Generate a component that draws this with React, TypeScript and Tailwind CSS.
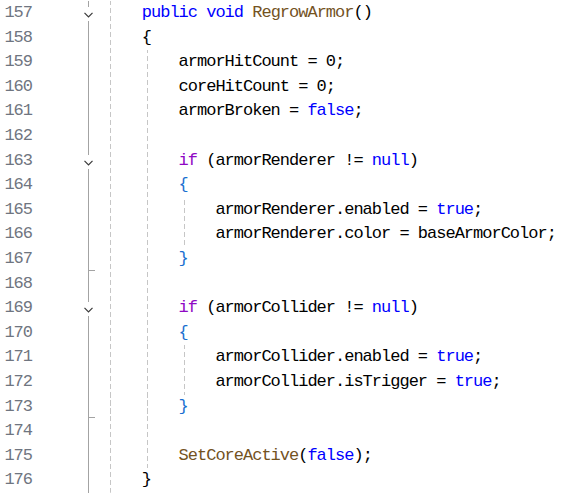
import React from "react";

type Tok = [string, string?];
type Line = {
  n: number;
  guides: number;
  toks: Tok[];
  fold?: "open" | "end";
};

const KW = "text-[#0000ff]";
const CTRL = "text-[#8f08c4]";
const METH = "text-[#74531f]";
const BR2 = "text-[#1a6fd0]";

const lines: Line[] = [
  { n: 157, guides: 1, fold: "open", toks: [["public", KW], [" "], ["void", KW], [" "], ["RegrowArmor", METH], ["()"]] },
  { n: 158, guides: 1, toks: [["{"]] },
  { n: 159, guides: 2, toks: [["armorHitCount = 0;"]] },
  { n: 160, guides: 2, toks: [["coreHitCount = 0;"]] },
  { n: 161, guides: 2, toks: [["armorBroken = "], ["false", KW], [";"]] },
  { n: 162, guides: 2, toks: [] },
  { n: 163, guides: 2, fold: "open", toks: [["if", CTRL], [" (armorRenderer != "], ["null", KW], [")"]] },
  { n: 164, guides: 2, toks: [["{", BR2]] },
  { n: 165, guides: 3, toks: [["armorRenderer.enabled = "], ["true", KW], [";"]] },
  { n: 166, guides: 3, toks: [["armorRenderer.color = baseArmorColor;"]] },
  { n: 167, guides: 2, fold: "end", toks: [["}", BR2]] },
  { n: 168, guides: 2, toks: [] },
  { n: 169, guides: 2, fold: "open", toks: [["if", CTRL], [" (armorCollider != "], ["null", KW], [")"]] },
  { n: 170, guides: 2, toks: [["{", BR2]] },
  { n: 171, guides: 3, toks: [["armorCollider.enabled = "], ["true", KW], [";"]] },
  { n: 172, guides: 3, toks: [["armorCollider.isTrigger = "], ["true", KW], [";"]] },
  { n: 173, guides: 2, fold: "end", toks: [["}", BR2]] },
  { n: 174, guides: 2, toks: [] },
  { n: 175, guides: 2, toks: [["SetCoreActive", METH], ["("], ["false", KW], [");"]] },
  { n: 176, guides: 1, toks: [["}"]] },
];

function Guide() {
  return (
    <div className="w-[36.8px] shrink-0 h-full flex">
      <div className="ml-[5px] w-px h-full bg-fixed bg-[repeating-linear-gradient(to_bottom,#c6c6c6_0px,#c6c6c6_5px,transparent_5px,transparent_8px)]" />
    </div>
  );
}

function FoldCell({ fold }: { fold?: "open" | "end" }) {
  if (fold === "open") {
    return (
      <div className="w-[73px] shrink-0 h-full flex">
        <div className="ml-[52px] w-[9px] h-full flex flex-col items-center">
          <div className="w-px h-[6px] bg-[#a3a3a3]" />
          <div className="h-[14px] flex items-center justify-center">
            <svg width="9" height="6" viewBox="0 0 9 6" className="mt-[2px]">
              <path d="M0.5 0.8 L4.5 4.8 L8.5 0.8" fill="none" stroke="#3a3a3a" strokeWidth="1.2" />
            </svg>
          </div>
          <div className="w-px flex-1 bg-[#a3a3a3]" />
        </div>
      </div>
    );
  }
  return (
    <div className="w-[73px] shrink-0 h-full flex">
      <div className="ml-[56px] w-px h-full bg-[#a3a3a3]" />
      {fold === "end" && <div className="self-end mb-px w-[6px] h-px bg-[#a3a3a3]" />}
    </div>
  );
}

export default function App() {
  return (
    <div className="w-[570px] h-[493px] bg-white overflow-hidden pt-px font-['Liberation_Mono',monospace] text-[17px] tracking-[-1px] text-black">
      {lines.map((l) => (
        <div key={l.n} className="flex h-[24.6px] items-stretch">
          <div className="w-[32px] shrink-0 text-right text-[#6f7580] leading-[24.6px]">{l.n}</div>
          <FoldCell fold={l.fold} />
          {Array.from({ length: l.guides }).map((_, i) => (
            <Guide key={i} />
          ))}
          <div className="whitespace-pre leading-[24.6px]">
            {l.toks.map((t, i) => (
              <span key={i} className={t[1] ?? ""}>
                {t[0]}
              </span>
            ))}
          </div>
        </div>
      ))}
      <div className="flex h-[24.6px]">
        <div className="w-[32px] shrink-0" />
        <FoldCell />
        <Guide />
      </div>
    </div>
  );
}
